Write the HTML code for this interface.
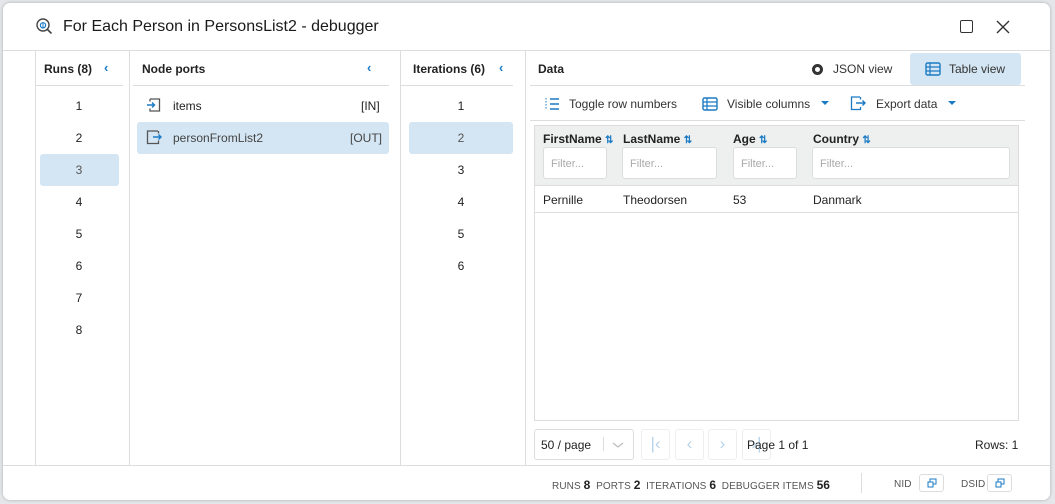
<!DOCTYPE html>
<html><head><style>
*{box-sizing:border-box;margin:0;padding:0}
body{width:1055px;height:504px;background:#e4e6e9;font-family:"Liberation Sans",sans-serif;font-size:12px;color:#222;position:relative;overflow:hidden}
.dlg{position:absolute;left:3px;top:3px;width:1047px;height:497px;background:#fff;border-radius:7px;box-shadow:0 0 3px rgba(0,0,0,.25);overflow:hidden}
.a{position:absolute}
.t{font-size:16px;color:#1a1a1a}
.vl{position:absolute;width:1px;background:#ddd}
.hl{position:absolute;height:1px;background:#ddd}
.hdr{font-size:12px;font-weight:bold;color:#222}
.chev{color:#1a7ac4;font-size:13px;font-weight:bold}
.num{position:absolute;width:80px;text-align:center;font-size:12px}
.sel{position:absolute;background:#d4e6f3;border-radius:3px}
.flt{position:absolute;top:147px;height:32px;border:1px solid #dcdcdc;border-radius:3px;background:#fff;color:#aaa;font-size:11px;padding:10px 7px}
.pb{position:absolute;top:429px;width:29px;height:31px;border:1px solid #eee;border-radius:3px;color:#b7d3ea;font-size:17px;text-align:center;line-height:28px}
.ft{font-size:10px;color:#555;letter-spacing:.1px}
.ft b{font-size:12px;color:#222;letter-spacing:0}
.cp{position:absolute;top:474px;width:25px;height:18px;border:1px solid #ddd;border-radius:3px}
</style></head><body>
<div class="dlg"></div>
<svg class="a" style="left:35px;top:17px" width="18" height="18" viewBox="0 0 18 18"><circle cx="8" cy="8" r="6" fill="none" stroke="#444" stroke-width="1.4"/><line x1="12.5" y1="12.5" x2="16.5" y2="16.5" stroke="#444" stroke-width="1.6"/><circle cx="8" cy="8.3" r="2.6" fill="none" stroke="#1a7ac4" stroke-width="1.2"/><line x1="8" y1="5.5" x2="8" y2="11" stroke="#1a7ac4"/></svg>
<div class="a t" style="left:63px;top:18px">For Each Person in PersonsList2 - debugger</div>
<div class="a" style="left:960px;top:20px;width:13px;height:13px;border:1.5px solid #333;border-radius:2px"></div>
<svg class="a" style="left:996px;top:20px" width="14" height="14"><path d="M1 1L13 13M13 1L1 13" stroke="#333" stroke-width="1.4"/></svg>
<div class="hl" style="left:3px;top:50px;width:1047px"></div>
<div class="hl" style="left:3px;top:465px;width:1047px"></div>
<div class="vl" style="left:35px;top:50px;height:415px"></div>
<div class="vl" style="left:129px;top:50px;height:415px"></div>
<div class="vl" style="left:400px;top:50px;height:415px"></div>
<div class="vl" style="left:525px;top:50px;height:415px"></div>
<div class="a hdr" style="left:44px;top:62px">Runs (8)</div><div class="a chev" style="left:104px;top:60px">‹</div>
<div class="hl" style="left:36px;top:85px;width:87px"></div>
<div class="sel" style="left:40px;top:154px;width:79px;height:32px"></div>
<div class="num" style="left:39px;top:99px">1</div><div class="num" style="left:39px;top:131px">2</div><div class="num" style="left:39px;top:163px;color:#555">3</div><div class="num" style="left:39px;top:195px">4</div><div class="num" style="left:39px;top:227px">5</div><div class="num" style="left:39px;top:259px">6</div><div class="num" style="left:39px;top:291px">7</div><div class="num" style="left:39px;top:323px">8</div>
<div class="a hdr" style="left:142px;top:62px">Node ports</div><div class="a chev" style="left:367px;top:60px">‹</div>
<div class="hl" style="left:133px;top:85px;width:256px"></div>
<div class="sel" style="left:137px;top:122px;width:252px;height:32px"></div>
<svg class="a" style="left:146px;top:97px" width="16" height="16"><path d="M4 2H13.5V14H4V11.5M4 4.5V2" fill="none" stroke="#555" stroke-width="1.3"/><path d="M1 8H8M6 5.5L8.5 8L6 10.5" fill="none" stroke="#1a7ac4" stroke-width="1.4"/></svg>
<div class="a" style="left:173px;top:99px">items</div><div class="a" style="left:361px;top:99px">[IN]</div>
<svg class="a" style="left:146px;top:129px" width="18" height="16"><path d="M12 2H1.5V14.5H12.5V11.5M12.5 4.5V2" fill="none" stroke="#555" stroke-width="1.3"/><path d="M7 8H15M12.5 5.5L15 8L12.5 10.5" fill="none" stroke="#1a7ac4" stroke-width="1.4"/></svg>
<div class="a" style="left:173px;top:131px;color:#444">personFromList2</div><div class="a" style="left:350px;top:131px;color:#444">[OUT]</div>
<div class="a hdr" style="left:413px;top:62px">Iterations (6)</div><div class="a chev" style="left:499px;top:60px">‹</div>
<div class="hl" style="left:400px;top:85px;width:113px"></div>
<div class="sel" style="left:409px;top:122px;width:104px;height:32px"></div>
<div class="num" style="left:421px;top:99px">1</div><div class="num" style="left:421px;top:131px;color:#555">2</div><div class="num" style="left:421px;top:163px">3</div><div class="num" style="left:421px;top:195px">4</div><div class="num" style="left:421px;top:227px">5</div><div class="num" style="left:421px;top:259px">6</div>
<div class="a hdr" style="left:538px;top:62px">Data</div>
<div class="a" style="left:812px;top:64px;width:11px;height:11px;border-radius:50%;border:3px solid #333"></div>
<div class="a" style="left:833px;top:62px;color:#333">JSON view</div>
<div class="sel" style="left:910px;top:53px;width:111px;height:32px"></div>
<svg class="a" style="left:925px;top:62px" width="16" height="14"><rect x="1" y="1" width="14" height="12" rx="1.5" fill="none" stroke="#1a7ac4" stroke-width="1.4"/><path d="M1 5H15M1 9H15M5 1V13" stroke="#1a7ac4" stroke-width="1.2"/></svg>
<div class="a" style="left:949px;top:62px;color:#333">Table view</div>
<div class="hl" style="left:530px;top:85px;width:495px"></div>
<svg class="a" style="left:544px;top:96px" width="16" height="16"><path d="M2 2V14" stroke="#1a7ac4" stroke-dasharray="1.5 1.5"/><path d="M6 3H15M6 8H15M6 13H15" stroke="#1a7ac4" stroke-width="1.4"/></svg>
<div class="a" style="left:569px;top:97px;color:#333">Toggle row numbers</div>
<svg class="a" style="left:702px;top:97px" width="16" height="14"><rect x="1" y="1" width="14" height="12" rx="1.5" fill="none" stroke="#1a7ac4" stroke-width="1.4"/><path d="M1 5H15M1 9H15M5 1V13" stroke="#1a7ac4" stroke-width="1.2"/></svg>
<div class="a" style="left:727px;top:97px;color:#333">Visible columns</div>
<svg class="a" style="left:821px;top:101px" width="8" height="5"><path d="M0 0H8L4 4Z" fill="#1a7ac4"/></svg>
<svg class="a" style="left:850px;top:95px" width="16" height="16"><path d="M10 2H1.5V14.5H10.5V12M10.5 4.5V2" fill="none" stroke="#1a7ac4" stroke-width="1.3"/><path d="M6 8H15M12.5 5.5L15 8L12.5 10.5" fill="none" stroke="#1a7ac4" stroke-width="1.4"/></svg>
<div class="a" style="left:876px;top:97px;color:#333">Export data</div>
<svg class="a" style="left:948px;top:101px" width="8" height="5"><path d="M0 0H8L4 4Z" fill="#1a7ac4"/></svg>
<div class="hl" style="left:530px;top:120px;width:495px"></div>
<div class="a" style="left:534px;top:125px;width:485px;height:296px;border:1px solid #ddd"></div>
<div class="a" style="left:535px;top:126px;width:483px;height:60px;background:#eef0f0;border-bottom:1px solid #ddd"></div>
<div class="a hdr" style="left:543px;top:132px">FirstName <span style="color:#1a7ac4;font-size:10px">⇅</span></div>
<div class="a hdr" style="left:623px;top:132px">LastName <span style="color:#1a7ac4;font-size:10px">⇅</span></div>
<div class="a hdr" style="left:733px;top:132px">Age <span style="color:#1a7ac4;font-size:10px">⇅</span></div>
<div class="a hdr" style="left:813px;top:132px">Country <span style="color:#1a7ac4;font-size:10px">⇅</span></div>
<div class="flt" style="left:543px;width:64px">Filter...</div>
<div class="flt" style="left:622px;width:95px">Filter...</div>
<div class="flt" style="left:733px;width:64px">Filter...</div>
<div class="flt" style="left:812px;width:198px">Filter...</div>
<div class="a" style="left:543px;top:193px">Pernille</div><div class="a" style="left:623px;top:193px">Theodorsen</div><div class="a" style="left:733px;top:193px">53</div><div class="a" style="left:813px;top:193px">Danmark</div>
<div class="hl" style="left:535px;top:212px;width:483px"></div>
<div class="a" style="left:534px;top:429px;width:100px;height:31px;border:1px solid #ddd;border-radius:3px"></div>
<div class="a" style="left:541px;top:438px">50 / page</div>
<div class="vl" style="left:603px;top:437px;height:14px"></div>
<svg class="a" style="left:611px;top:440px" width="14" height="10"><path d="M2 3L7 7L12 3" fill="none" stroke="#bbb" stroke-width="1.2"/></svg>
<div class="pb" style="left:641px">|‹</div><div class="pb" style="left:675px">‹</div><div class="pb" style="left:708px">›</div><div class="pb" style="left:742px">›|</div>
<div class="a" style="left:747px;top:438px">Page 1 of 1</div>
<div class="a" style="left:975px;top:438px">Rows: 1</div>
<div class="a ft" style="left:552px;top:478px">RUNS <b>8</b>&nbsp; PORTS <b>2</b>&nbsp; ITERATIONS <b>6</b>&nbsp; DEBUGGER ITEMS <b>56</b></div>
<div class="vl" style="left:861px;top:473px;height:20px"></div>
<div class="a ft" style="left:894px;top:479px">NID</div><div class="cp" style="left:919px"></div>
<div class="a ft" style="left:961px;top:479px">DSID</div><div class="cp" style="left:987px"></div>
<svg class="a" style="left:927px;top:478px" width="10" height="10"><rect x="3" y="1" width="6" height="5" fill="none" stroke="#1a7ac4"/><rect x="1" y="4" width="5" height="5" fill="#fff" stroke="#1a7ac4"/></svg>
<svg class="a" style="left:995px;top:478px" width="10" height="10"><rect x="3" y="1" width="6" height="5" fill="none" stroke="#1a7ac4"/><rect x="1" y="4" width="5" height="5" fill="#fff" stroke="#1a7ac4"/></svg>
</body></html>
